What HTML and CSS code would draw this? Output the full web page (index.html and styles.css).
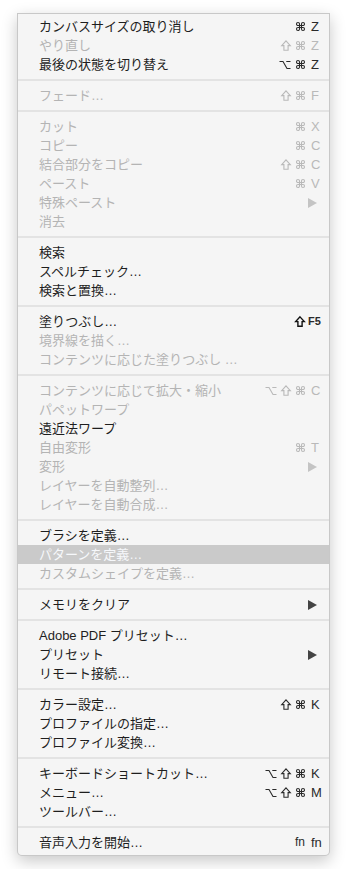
FILE: index.html
```html
<!DOCTYPE html>
<html lang="ja">
<head>
  <meta charset="UTF-8" />
  <meta name="viewport" content="width=device-width, initial-scale=1.0"/>
  <title>編集メニュー</title>
  <link rel="stylesheet" href="styles.css">
</head>
<body>
  <!-- modifier key symbols, reused below -->
  <svg class="defs" width="0" height="0">
    <defs>
      <path id="cmd" d="M3.5 3.5V2A1.5 1.5 0 1 0 2 3.5H7A1.5 1.5 0 1 0 5.5 2V7A1.5 1.5 0 1 0 7 5.5H2A1.5 1.5 0 1 0 3.5 7Z"/>
      <path id="shift" d="M5 0.9L9.3 5.6H7.1V10.2H2.9V5.6H0.7Z"/>
      <path id="opt" d="M0.5 1.5H4L8 8.5H11.5M7.3 1.5H11.5"/>
    </defs>
  </svg>

  <div class="menu">
    <div class="item">カンバスサイズの取り消し<span class="keys"><span class="mod"><svg class="cmd" viewBox="0 0 9 9"><use href="#cmd"/></svg></span><span class="key">Z</span></span></div>
    <div class="item off">やり直し<span class="keys"><span class="mod"><svg class="shift" viewBox="0 0 10 11"><use href="#shift"/></svg></span><span class="mod"><svg class="cmd" viewBox="0 0 9 9"><use href="#cmd"/></svg></span><span class="key">Z</span></span></div>
    <div class="item">最後の状態を切り替え<span class="keys"><span class="mod"><svg class="opt" viewBox="0 0 12 10"><use href="#opt"/></svg></span><span class="mod"><svg class="cmd" viewBox="0 0 9 9"><use href="#cmd"/></svg></span><span class="key">Z</span></span></div>
    <div class="sep"></div>

    <div class="item off">フェード…<span class="keys"><span class="mod"><svg class="shift" viewBox="0 0 10 11"><use href="#shift"/></svg></span><span class="mod"><svg class="cmd" viewBox="0 0 9 9"><use href="#cmd"/></svg></span><span class="key">F</span></span></div>
    <div class="sep"></div>

    <div class="item off">カット<span class="keys"><span class="mod"><svg class="cmd" viewBox="0 0 9 9"><use href="#cmd"/></svg></span><span class="key">X</span></span></div>
    <div class="item off">コピー<span class="keys"><span class="mod"><svg class="cmd" viewBox="0 0 9 9"><use href="#cmd"/></svg></span><span class="key">C</span></span></div>
    <div class="item off">結合部分をコピー<span class="keys"><span class="mod"><svg class="shift" viewBox="0 0 10 11"><use href="#shift"/></svg></span><span class="mod"><svg class="cmd" viewBox="0 0 9 9"><use href="#cmd"/></svg></span><span class="key">C</span></span></div>
    <div class="item off">ペースト<span class="keys"><span class="mod"><svg class="cmd" viewBox="0 0 9 9"><use href="#cmd"/></svg></span><span class="key">V</span></span></div>
    <div class="item off">特殊ペースト<span class="keys"><span class="key"><span class="arrow"></span></span></span></div>
    <div class="item off">消去</div>
    <div class="sep"></div>

    <div class="item">検索</div>
    <div class="item">スペルチェック…</div>
    <div class="item">検索と置換…</div>
    <div class="sep"></div>

    <div class="item">塗りつぶし…<span class="keys"><span class="mod"><svg class="shift bold" viewBox="0 0 10 11"><use href="#shift"/></svg></span><span class="key fkey">F5</span></span></div>
    <div class="item off">境界線を描く…</div>
    <div class="item off">コンテンツに応じた塗りつぶし …</div>
    <div class="sep"></div>

    <div class="item off">コンテンツに応じて拡大・縮小<span class="keys"><span class="mod"><svg class="opt" viewBox="0 0 12 10"><use href="#opt"/></svg></span><span class="mod"><svg class="shift" viewBox="0 0 10 11"><use href="#shift"/></svg></span><span class="mod"><svg class="cmd" viewBox="0 0 9 9"><use href="#cmd"/></svg></span><span class="key">C</span></span></div>
    <div class="item off">パペットワープ</div>
    <div class="item">遠近法ワープ</div>
    <div class="item off">自由変形<span class="keys"><span class="mod"><svg class="cmd" viewBox="0 0 9 9"><use href="#cmd"/></svg></span><span class="key">T</span></span></div>
    <div class="item off">変形<span class="keys"><span class="key"><span class="arrow"></span></span></span></div>
    <div class="item off">レイヤーを自動整列…</div>
    <div class="item off">レイヤーを自動合成…</div>
    <div class="sep"></div>

    <div class="item">ブラシを定義…</div>
    <div class="item active">パターンを定義…</div>
    <div class="item off">カスタムシェイプを定義…</div>
    <div class="sep"></div>

    <div class="item">メモリをクリア<span class="keys"><span class="key"><span class="arrow"></span></span></span></div>
    <div class="sep"></div>

    <div class="item">Adobe PDF プリセット…</div>
    <div class="item">プリセット<span class="keys"><span class="key"><span class="arrow"></span></span></span></div>
    <div class="item">リモート接続…</div>
    <div class="sep"></div>

    <div class="item">カラー設定…<span class="keys"><span class="mod"><svg class="shift" viewBox="0 0 10 11"><use href="#shift"/></svg></span><span class="mod"><svg class="cmd" viewBox="0 0 9 9"><use href="#cmd"/></svg></span><span class="key">K</span></span></div>
    <div class="item">プロファイルの指定…</div>
    <div class="item">プロファイル変換…</div>
    <div class="sep"></div>

    <div class="item">キーボードショートカット…<span class="keys"><span class="mod"><svg class="opt" viewBox="0 0 12 10"><use href="#opt"/></svg></span><span class="mod"><svg class="shift" viewBox="0 0 10 11"><use href="#shift"/></svg></span><span class="mod"><svg class="cmd" viewBox="0 0 9 9"><use href="#cmd"/></svg></span><span class="key">K</span></span></div>
    <div class="item">メニュー…<span class="keys"><span class="mod"><svg class="opt" viewBox="0 0 12 10"><use href="#opt"/></svg></span><span class="mod"><svg class="shift" viewBox="0 0 10 11"><use href="#shift"/></svg></span><span class="mod"><svg class="cmd" viewBox="0 0 9 9"><use href="#cmd"/></svg></span><span class="key">M</span></span></div>
    <div class="item">ツールバー…</div>
    <div class="sep"></div>

    <div class="item">音声入力を開始…<span class="keys"><span class="mod fn">fn</span><span class="key">fn</span></span></div>
  </div>
</body>
</html>
```

FILE: styles.css
```css
* {
  box-sizing: border-box;
}

body {
  margin: 0;
  padding: 13px 17px;
  background: #fff;
  font-family: "Liberation Sans", "Noto Sans CJK JP", sans-serif;
}

.defs {
  position: absolute;
}

.menu {
  width: 313px;
  background: #f5f5f5;
  border: 1px solid rgba(0, 0, 0, 0.18);
  border-radius: 0 0 5px 5px;
  box-shadow: 0 5px 16px rgba(0, 0, 0, 0.22);
  padding: 3px 0 3px;
}

.item {
  display: flex;
  align-items: center;
  height: 19px;
  line-height: 19px;
  padding: 0 7px 0 21px;
  font-size: 13px;
  color: #1e1e1e;
  white-space: nowrap;
}

.item.off {
  color: #b4b4b4;
}

.item.active {
  background: #cacaca;
  color: #f6f8fb;
}

.keys {
  display: flex;
  align-items: center;
  margin-left: auto;
  color: #2a2a2a;
}

.off .keys {
  color: #b9b9b9;
}

.mod {
  width: 14px;
  height: 19px;
  display: flex;
  align-items: center;
  justify-content: center;
}

.mod svg {
  fill: none;
  stroke: currentColor;
  stroke-width: 1.1;
  overflow: visible;
}

.cmd {
  width: 9px;
  height: 9px;
}

.shift {
  width: 10px;
  height: 11px;
}

.mod .shift.bold {
  stroke-width: 1.4;
  color: #111;
}

.opt {
  width: 12px;
  height: 10px;
  margin-left: -2px;
}

.mod.fn {
  font-size: 12px;
}

.key {
  width: 15px;
  padding-left: 4px;
  font-size: 13px;
  display: flex;
  align-items: center;
}

.key.fkey {
  padding-left: 1px;
  font-size: 11px;
  font-weight: bold;
}

.arrow {
  width: 0;
  height: 0;
  margin-left: -3px;
  border-left: 9px solid #444;
  border-top: 5px solid transparent;
  border-bottom: 5px solid transparent;
}

.off .arrow {
  border-left-color: #c4c4c4;
}

.sep {
  height: 2px;
  margin: 5px 0;
  background: #e3e3e3;
}
```
